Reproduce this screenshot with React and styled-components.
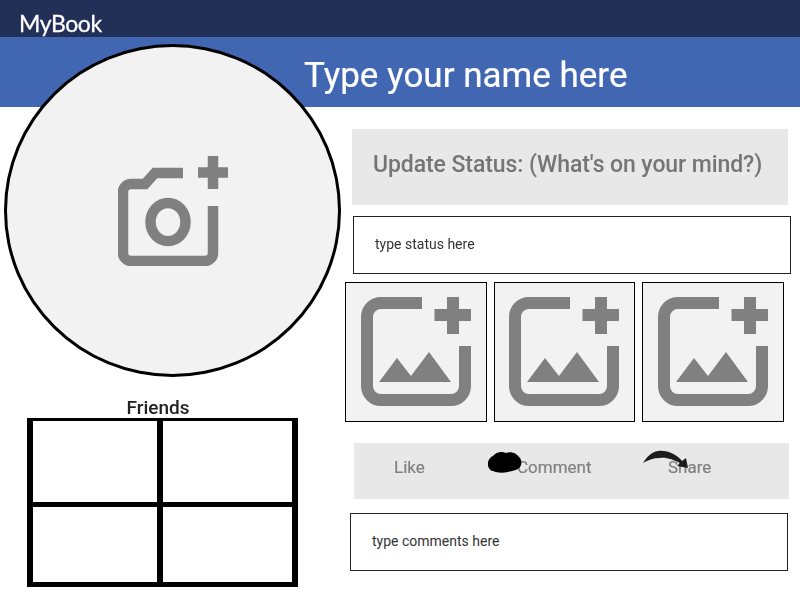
import React from 'react';
import styled, { createGlobalStyle } from 'styled-components';

const GlobalStyle = createGlobalStyle`
  html, body {
    margin: 0;
    padding: 0;
    background: #fff;
    font-family: Roboto, "Liberation Sans", sans-serif;
  }
  * {
    box-sizing: border-box;
  }
`;

const Page = styled.div`
  width: 800px;
  height: 600px;
  overflow: hidden;
  filter: blur(0.35px);
`;

const TopBar = styled.header`
  height: 37px;
  background: #222f57;
  padding-left: 19px;
  display: flex;
  align-items: center;
`;

const Logo = styled.span`
  font-family: Lato, sans-serif;
  font-size: 23px;
  letter-spacing: -0.4px;
  -webkit-text-stroke: 0.3px #fff;
  color: #fff;
  margin-top: 9px;
`;

const Banner = styled.div`
  height: 70px;
  background: #4267b2;
  padding: 6px 0 0 304px;
  display: flex;
  align-items: center;
`;

const Name = styled.h1`
  margin: 0;
  font-size: 35px;
  font-weight: 400;
  -webkit-text-stroke: 0.2px #fff;
  color: #fff;
`;

const Main = styled.main`
  display: flex;
`;

const LeftColumn = styled.section`
  width: 345px;
  margin-top: -63px;
  padding-left: 4px;
  position: relative;
`;

const Avatar = styled.div`
  width: 337px;
  height: 333px;
  border-radius: 50%;
  border: 3.5px solid #000;
  background: #f2f2f2;
  display: flex;
  align-items: center;
  justify-content: center;
`;

const FriendsTitle = styled.h2`
  margin: 20px 0 0;
  width: 308px;
  text-align: center;
  font-size: 19px;
  line-height: 21px;
  font-weight: 500;
  color: #222;
`;

const FriendsGrid = styled.div`
  width: 271px;
  height: 169px;
  margin-left: 23px;
  display: grid;
  grid-template-columns: 124px 129px;
  grid-template-rows: 81px 75px;
  gap: 5px 6px;
  padding: 3px 6px 5px;
  background: #000;
`;

const FriendCell = styled.div`
  background: #fff;
`;

const RightColumn = styled.section`
  flex: 1;
  padding-top: 22px;
  display: flex;
  flex-direction: column;
`;

const StatusHeading = styled.div`
  width: 436px;
  height: 76px;
  margin-left: 7px;
  padding: 0 0 5px 21px;
  background: #e8e8e8;
  color: #757575;
  font-size: 23px;
  font-weight: 500;
  letter-spacing: -0.08px;
  display: flex;
  align-items: center;
`;

const TextBox = styled.div`
  width: ${(props) => props.$width}px;
  height: ${(props) => props.$height}px;
  margin-left: ${(props) => props.$left}px;
  margin-top: ${(props) => props.$top}px;
  padding: 0 0 2px 21px;
  border: 1px solid #222;
  background: #fff;
  color: #333;
  font-size: 14px;
  display: flex;
  align-items: center;
`;

const Tiles = styled.div`
  display: flex;
  gap: 7px;
  margin-top: 8px;
`;

const Tile = styled.div`
  width: 141.5px;
  height: 140px;
  border: 1px solid #000;
  background: #f2f2f2;
  display: flex;
  align-items: center;
  justify-content: center;
`;

const ActionBar = styled.div`
  width: 435px;
  height: 56px;
  margin: 21px 0 14px 9px;
  padding: 0 0 8px 40px;
  background: #e8e8e8;
  display: grid;
  grid-template-columns: 123px 151px 1fr;
  align-items: center;
`;

const Action = styled.span`
  position: relative;
  font-size: 17px;
  line-height: 20px;
  -webkit-text-stroke: 0.2px #808080;
  color: #808080;
`;

const CommentBlob = styled.svg`
  position: absolute;
  left: -29px;
  top: -5px;
`;

const ShareArrow = styled.svg`
  position: absolute;
  left: -26px;
  top: -7px;
`;

const CameraPlus = () => (
  <svg width="110" height="110" viewBox="0 0 110 110" fill="none" stroke="#808080" strokeWidth="10.5">
    <path d="M65 17H37L27 28H13a8 8 0 0 0-8 8V97a8 8 0 0 0 8 8H87a8 8 0 0 0 8-8V50" />
    <ellipse cx="50" cy="66" rx="17.5" ry="19" />
    <path d="M95 0V33M80 16.5H110" />
  </svg>
);

const ImagePlus = () => (
  <svg width="110" height="110" viewBox="0 0 110 110" fill="none" stroke="#808080" strokeWidth="12">
    <path d="M61 6H20A14 14 0 0 0 6 20V89a14 14 0 0 0 14 14H90a14 14 0 0 0 14-14V49" />
    <path d="M92 0V37M73.500 18H110" />
    <path d="M18 85L36 61L50 79L68 55L90 85Z" fill="#808080" stroke="none" />
  </svg>
);

export default function App() {
  return (
    <Page>
      <GlobalStyle />
      <TopBar>
        <Logo>MyBook</Logo>
      </TopBar>
      <Banner>
        <Name>Type your name here</Name>
      </Banner>
      <Main>
        <LeftColumn>
          <Avatar>
            <CameraPlus />
          </Avatar>
          <FriendsTitle>Friends</FriendsTitle>
          <FriendsGrid>
            {[0, 1, 2, 3].map((cell) => (
              <FriendCell key={cell} />
            ))}
          </FriendsGrid>
        </LeftColumn>
        <RightColumn>
          <StatusHeading>Update Status: (What's on your mind?)</StatusHeading>
          <TextBox $width={438} $height={58} $left={8} $top={11}>
            type status here
          </TextBox>
          <Tiles>
            {[0, 1, 2].map((tile) => (
              <Tile key={tile}>
                <ImagePlus />
              </Tile>
            ))}
          </Tiles>
          <ActionBar>
            <Action>Like</Action>
            <Action>
              <CommentBlob width="34" height="21" viewBox="0 0 34 21">
                <path
                  d="M0 14C-1 9 2 5 5 4C8 0 14 -1 18 1C24 -1 29 2 31 5C34 7 34 13 32 15C30 18 24 19 20 20C15 21 9 21 5 19C3 19 1 17 0 14Z"
                  fill="#000"
                />
              </CommentBlob>
              Comment
            </Action>
            <Action>
              <ShareArrow width="48" height="24" viewBox="0 0 48 24">
                <path
                  d="M1 13C5 7 9 2 16 1C26 0 35 5 40 11L44 8L46 18L35 16L38 13C32 10 24 7 18 8C11 8 6 10 1 13Z"
                  fill="#1c1c1c"
                />
              </ShareArrow>
              Share
            </Action>
          </ActionBar>
          <TextBox $width={438} $height={58} $left={5} $top={0}>
            type comments here
          </TextBox>
        </RightColumn>
      </Main>
    </Page>
  );
}
